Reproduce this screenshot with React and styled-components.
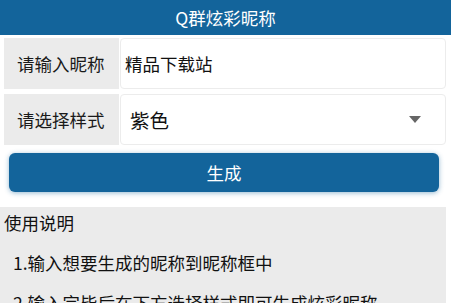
import React from 'react';
import styled, { createGlobalStyle } from 'styled-components';

const GlobalStyle = createGlobalStyle`
  html, body {
    margin: 0;
    padding: 0;
    background: #ffffff;
    overflow: hidden;
  }
  body {
    font-family: "Noto Sans CJK SC", "Noto Sans", sans-serif;
  }
`;

const Page = styled.div`
  width: 451px;
  height: 303px;
  overflow: hidden;
  display: flex;
  flex-direction: column;
`;

const Header = styled.header`
  height: 35px;
  background: #13649b;
  color: #ffffff;
  font-size: 17.5px;
  display: flex;
  align-items: center;
  justify-content: center;
  flex-shrink: 0;
`;

const Form = styled.div`
  display: flex;
  flex-direction: column;
  gap: 5px;
  padding: 3px 5px 0 4px;
`;

const Row = styled.div`
  display: flex;
  height: 51px;
`;

const Label = styled.div`
  width: 115px;
  flex-shrink: 0;
  background: #ebebeb;
  color: #1a1a1a;
  font-size: 17.5px;
  display: flex;
  align-items: center;
  padding-left: 13px;
  box-sizing: border-box;
`;

const Field = styled.div`
  flex: 1;
  margin-left: 1px;
  border: 1px solid #ececec;
  border-radius: 4px;
  background: #ffffff;
  display: flex;
  align-items: center;
  padding-left: ${p => p.$pad}px;
  padding-right: 24px;
  font-size: ${p => p.$size}px;
  color: #111111;
`;

const Value = styled.span`
  flex: 1;
`;

const Arrow = styled.svg`
  width: 12px;
  height: 7px;
  flex-shrink: 0;
`;

const Button = styled.button`
  all: unset;
  margin: 8px 12px 0 9px;
  height: 39px;
  border-radius: 6px;
  background: #13649b;
  color: #ffffff;
  font-size: 17.5px;
  display: flex;
  align-items: center;
  justify-content: center;
  box-shadow: 0 1px 5px rgba(19, 100, 155, 0.45);
  flex-shrink: 0;
`;

const Help = styled.section`
  margin: 15px 5px 0 0;
  background: #ebebeb;
  color: #111111;
  flex: 1;
  padding-top: 4px;
`;

const HelpTitle = styled.div`
  font-size: 17.5px;
  line-height: 24px;
  padding-left: 4px;
`;

const HelpItem = styled.div`
  font-size: 17.5px;
  line-height: 24px;
  padding-left: 13px;
  margin-top: 16px;
  white-space: nowrap;
`;

export default function App() {
  return (
    <Page>
      <GlobalStyle />
      <Header>Q群炫彩昵称</Header>
      <Form>
        <Row>
          <Label>请输入昵称</Label>
          <Field $pad={4} $size={17.5}>
            <Value>精品下载站</Value>
          </Field>
        </Row>
        <Row>
          <Label>请选择样式</Label>
          <Field $pad={9} $size={19.5}>
            <Value>紫色</Value>
            <Arrow viewBox="0 0 12 7">
              <path d="M0 0 H12 L6 7 Z" fill="#666666" />
            </Arrow>
          </Field>
        </Row>
      </Form>
      <Button>生成</Button>
      <Help>
        <HelpTitle>使用说明</HelpTitle>
        <HelpItem>1.输入想要生成的昵称到昵称框中</HelpItem>
        <HelpItem>2.输入完毕后在下方选择样式即可生成炫彩昵称</HelpItem>
      </Help>
    </Page>
  );
}
